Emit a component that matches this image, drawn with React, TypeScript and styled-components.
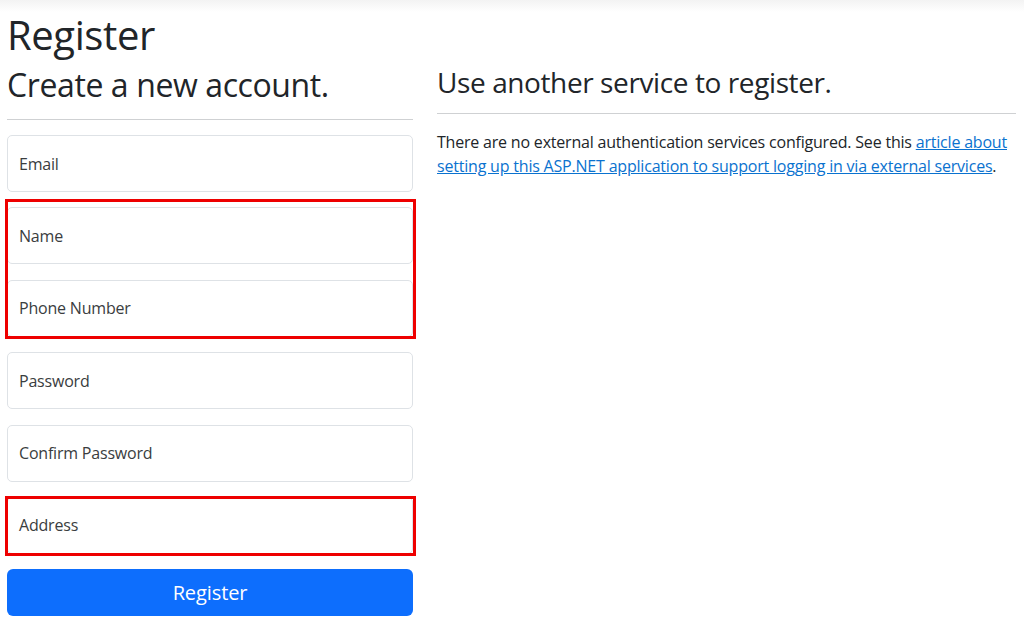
import React from "react";
import styled, { createGlobalStyle } from "styled-components";

const Global = createGlobalStyle`
  html, body { margin: 0; padding: 0; }
  body {
    background: linear-gradient(#f3f3f3 0px, #ffffff 12px) no-repeat;
    background-color: #fff;
    font-family: "Open Sans", "Noto Sans", sans-serif;
    color: #212529;
    width: 1024px;
    height: 626px;
    overflow: hidden;
  }
`;

const Page = styled.div`
  display: flex;
  gap: 24px;
  padding-left: 7px;
`;

const LeftCol = styled.div`
  width: 406px;
  flex: none;
  display: flex;
  flex-direction: column;
`;

const RightCol = styled.div`
  flex: 1;
  min-width: 0;
  padding-right: 8px;
`;

const Title = styled.h1`
  margin: 11px 0 0;
  font-size: 40px;
  line-height: 48px;
  font-weight: 400;
  letter-spacing: -0.4px;
`;

const Subtitle = styled.h2`
  margin: 7px 0 0;
  font-size: 32px;
  line-height: 38px;
  font-weight: 400;
  letter-spacing: -0.4px;
`;

const Rule = styled.hr<{ $top: number; $bottom: number }>`
  margin: ${(p) => p.$top}px 0 ${(p) => p.$bottom}px;
  border: 0;
  border-top: 1px solid #cfd1d3;
  height: 0;
`;

const Form = styled.div`
  display: flex;
  flex-direction: column;
  gap: 15.4px;
`;

const Group = styled.div`
  display: flex;
  flex-direction: column;
  gap: 15.4px;
`;

const Highlight = styled.div<{ $top: number; $bottom: number }>`
  position: relative;
  display: flex;
  flex-direction: column;
  gap: 15.4px;
  &::after {
    content: "";
    position: absolute;
    left: -2px;
    right: -3px;
    top: ${(p) => -p.$top}px;
    bottom: ${(p) => -p.$bottom}px;
    border: 3px solid #ee0000;
    pointer-events: none;
  }
`;

const Field = styled.div`
  height: 57px;
  box-sizing: border-box;
  border: 1px solid #dee2e6;
  border-radius: 5px;
  background: #fff;
  display: flex;
  align-items: center;
  padding: 0 11px;
  font-size: 16px;
  color: #3a3d40;
  letter-spacing: -0.2px;
`;

const Button = styled.div`
  height: 47px;
  border-radius: 6px;
  background: #0d6efd;
  color: #fff;
  display: flex;
  align-items: center;
  justify-content: center;
  font-size: 20px;
  letter-spacing: -0.1px;
`;

const SideTitle = styled.h3`
  margin: 65px 0 0;
  font-size: 28px;
  line-height: 34px;
  font-weight: 400;
  letter-spacing: -0.4px;
`;

const Text = styled.p`
  margin: 0;
  font-size: 16px;
  line-height: 23.5px;
  letter-spacing: -0.2px;
`;

const Link = styled.a`
  color: #0a72cf;
  text-decoration: underline;
`;

export default function App() {
  return (
    <>
      <Global />
      <Page>
        <LeftCol>
          <Title>Register</Title>
          <Subtitle>Create a new account.</Subtitle>
          <Rule $top={15} $bottom={15} />
          <Form>
            <Field>Email</Field>
            <Highlight $top={8} $bottom={2}>
              <Field>Name</Field>
              <Field>Phone Number</Field>
            </Highlight>
            <Group>
              <Field>Password</Field>
              <Field>Confirm Password</Field>
            </Group>
            <Highlight $top={1} $bottom={2}>
              <Field>Address</Field>
            </Highlight>
            <Button>Register</Button>
          </Form>
        </LeftCol>
        <RightCol>
          <SideTitle>Use another service to register.</SideTitle>
          <Rule $top={14} $bottom={17} />
          <Text>
            There are no external authentication services configured. See this{" "}
            <Link href="#">
              article about setting up this ASP.NET application to support logging in via external services
            </Link>
            .
          </Text>
        </RightCol>
      </Page>
    </>
  );
}
